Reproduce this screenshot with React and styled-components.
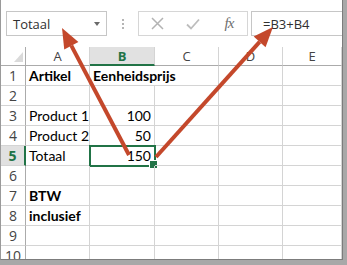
import React from 'react'
import styled, { createGlobalStyle } from 'styled-components'

const Global = createGlobalStyle`
  body { margin:0; background:#fff; }
  * { box-sizing:border-box; }
`

const Shadow = styled.div`
  display:flex;
  width:347px;
  height:265px;
  padding:0 4px 5px 0;
  background:#a8a8a8;
`

const Frame = styled.div`
  position:relative;
  flex:1;
  border-left:1px solid #9a9a9a;
  border-right:1px solid #7c7c7c;
  border-bottom:1px solid #7c7c7c;
  overflow:hidden;
  background:#fff;
  font-family:"Open Sans", "Noto Sans", sans-serif;
`

const FormulaBar = styled.div`
  display:flex;
  align-items:flex-start;
  height:47px;
  padding:11px 0 0 5px;
`

const NameBox = styled.div`
  display:flex;
  align-items:center;
  width:101px;
  height:25px;
  padding-left:6px;
  border:1px solid #c6c6c6;
  font-size:13px;
  color:#303030;
`

const Caret = styled.span`
  margin-left:auto;
  margin-right:6px;
  border-left:3.5px solid transparent;
  border-right:3.5px solid transparent;
  border-top:4px solid #6a6a6a;
`

const Grip = styled.div`
  width:31px;
  height:25px;
  display:flex;
  flex-direction:column;
  align-items:center;
  justify-content:center;
  gap:2px;
  span { width:2px; height:2px; background:#b5b5b5; }
`

const ButtonBox = styled.div`
  display:flex;
  align-items:center;
  width:110px;
  height:25px;
  border:1px solid #d6d6d6;
`

const IconSlot = styled.div`
  width:36px;
  display:flex;
  justify-content:center;
  align-items:center;
`

const Fx = styled.span`
  font-family:"Liberation Serif", serif;
  font-style:italic;
  font-size:15px;
  color:#6e6e6e;
  letter-spacing:-1px;
`

const FormulaInput = styled.div`
  flex:1;
  height:25px;
  margin-left:3px;
  padding-left:11px;
  display:flex;
  align-items:center;
  border:1px solid #c6c6c6;
  border-right:none;
  font-size:13px;
  color:#303030;
`

const Sheet = styled.div`
  display:grid;
  grid-template-columns:25px 64px 65px 64px 64px 59px;
  grid-template-rows:19px;
  grid-auto-rows:20px;
`

const Corner = styled.div`
  position:relative;
  border-right:1px solid #ababab;
  border-bottom:1px solid #ababab;
  &::after {
    content:'';
    position:absolute;
    right:2px;
    bottom:3px;
    border-left:9px solid transparent;
    border-bottom:10px solid #dadada;
  }
`

const ColHead = styled.div`
  display:flex;
  align-items:center;
  justify-content:center;
  border-right:1px solid #d4d4d4;
  border-bottom:${p => p.$active ? '2px solid #217346' : '1px solid #ababab'};
  background:${p => p.$active ? '#e1e1e1' : '#fff'};
  color:${p => p.$active ? '#217346' : '#444'};
  font-weight:${p => p.$active ? 700 : 400};
  font-size:13px;
`

const RowHead = styled.div`
  display:flex;
  align-items:center;
  justify-content:center;
  border-bottom:1px solid #d4d4d4;
  border-right:${p => p.$active ? '2px solid #217346' : '1px solid #ababab'};
  background:${p => p.$active ? '#e1e1e1' : '#fff'};
  color:${p => p.$active ? '#217346' : '#444'};
  font-weight:${p => p.$active ? 700 : 400};
  font-size:14px;
`

const Cell = styled.div`
  position:relative;
  display:flex;
  align-items:center;
  justify-content:${p => p.$num ? 'flex-end' : 'flex-start'};
  padding:0 3px;
  border-right:${p => p.$spill ? 'none' : '1px solid #d4d4d4'};
  border-bottom:1px solid #d4d4d4;
  font-family:Lato, "Liberation Sans", sans-serif;
  font-size:14px;
  font-weight:${p => p.$bold ? 700 : 400};
  color:#000;
  white-space:nowrap;
  overflow:visible;
  z-index:${p => p.$spill ? 1 : 0};
`

const Selection = styled.div`
  position:absolute;
  left:-1px;
  top:-1px;
  right:-2px;
  bottom:-2px;
  border:2px solid #217346;
  &::after {
    content:'';
    position:absolute;
    right:-4px;
    bottom:-4px;
    width:7px;
    height:7px;
    background:#217346;
    border:1px solid #fff;
  }
`

const Arrows = styled.svg`
  position:absolute;
  left:-1px;
  top:0;
  pointer-events:none;
  z-index:5;
`

const rows = [
  { a: 'Artikel', b: 'Eenheidsprijs', bold: true, spill: true },
  {},
  { a: 'Product 1', b: '100' },
  { a: 'Product 2', b: '50' },
  { a: 'Totaal', b: '150', selected: true },
  {},
  { a: 'BTW', boldA: true },
  { a: 'inclusief', boldA: true },
  {},
  {},
]

const cols = ['A', 'B', 'C', 'D', 'E']

const arrowHead = (x1, y1, x2, y2, len = 20, half = 8) => {
  const dx = x2 - x1, dy = y2 - y1
  const l = Math.hypot(dx, dy)
  const ux = dx / l, uy = dy / l
  const bx = x2 - ux * len, by = y2 - uy * len
  return {
    base: [bx, by],
    pts: `${x2},${y2} ${bx - uy * half},${by + ux * half} ${bx + uy * half},${by - ux * half}`,
  }
}

const Arrow = ({ from, to }) => {
  const h = arrowHead(from[0], from[1], to[0], to[1])
  return (
    <g fill="#c4482b" stroke="#c4482b">
      <line x1={from[0]} y1={from[1]} x2={h.base[0]} y2={h.base[1]} strokeWidth="4" />
      <polygon points={h.pts} stroke="none" />
    </g>
  )
}

const App = () => {
  return (
    <Shadow>
      <Global />
      <Frame>
        <FormulaBar>
          <NameBox>Totaal<Caret /></NameBox>
          <Grip><span /><span /><span /></Grip>
          <ButtonBox>
            <IconSlot>
              <svg width="13" height="13" viewBox="0 0 13 13">
                <path d="M1 1L12 12M12 1L1 12" stroke="#b3b3b3" strokeWidth="1.5" />
              </svg>
            </IconSlot>
            <IconSlot>
              <svg width="14" height="12" viewBox="0 0 14 12">
                <path d="M1 6.5L5 10.5L13 1.5" stroke="#bdbdbd" strokeWidth="1.8" fill="none" />
              </svg>
            </IconSlot>
            <IconSlot><Fx>fx</Fx></IconSlot>
          </ButtonBox>
          <FormulaInput>=B3+B4</FormulaInput>
        </FormulaBar>
        <Sheet>
          <Corner />
          {cols.map(c => <ColHead key={c} $active={c === 'B'}>{c}</ColHead>)}
          {rows.map((r, i) => (
            <React.Fragment key={i}>
              <RowHead $active={r.selected}>{i + 1}</RowHead>
              <Cell $bold={r.bold || r.boldA}>{r.a}</Cell>
              <Cell $num={!r.bold} $bold={r.bold} $spill={r.spill}>
                {r.b}
                {r.selected && <Selection />}
              </Cell>
              <Cell />
              <Cell />
              <Cell />
            </React.Fragment>
          ))}
        </Sheet>
        <Arrows width="347" height="265">
          <Arrow from={[129, 155]} to={[62, 28]} />
          <Arrow from={[156, 157]} to={[273, 27]} />
        </Arrows>
      </Frame>
    </Shadow>
  )
}

export default App
